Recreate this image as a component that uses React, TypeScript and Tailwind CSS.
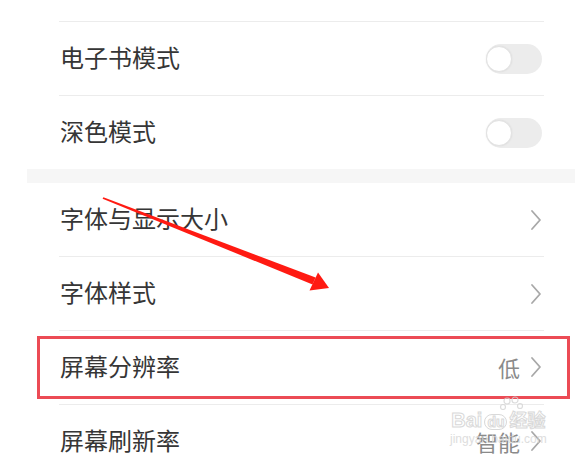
import React from "react";

const font = { fontFamily: '"Noto Sans CJK SC", "Noto Sans", sans-serif' };

function Toggle() {
  return (
    <div className="relative h-[30px] w-[56px] rounded-full bg-[#ececec]">
      <div className="absolute left-0 top-[2px] h-[26px] w-[26px] rounded-full border border-[#e2e2e2] bg-white shadow-[0_0_2px_rgba(0,0,0,0.08)]" />
    </div>
  );
}

function Chevron() {
  return (
    <svg width="12" height="22" viewBox="0 0 12 22" className="ml-[10px]">
      <path d="M2 2 L10 11 L2 20" fill="none" stroke="#a8a8a8" strokeWidth="1.8" strokeLinecap="round" strokeLinejoin="round" />
    </svg>
  );
}

function Line() {
  return <div className="ml-[59px] h-px w-[485px] bg-[#ececec]" />;
}

function Row({ label, right }: { label: string; right: React.ReactNode }) {
  return (
    <div className="flex h-[73px] items-center pl-[60px] pr-[41px]">
      <span className="-mt-[4px] flex-1 text-[24px] leading-none text-[#363636]">{label}</span>
      {right}
    </div>
  );
}

function Value({ text }: { text: string }) {
  return (
    <div className="-mt-[2px] flex items-center">
      <span className="text-[22px] leading-none text-[#8a8a8a]">{text}</span>
      <Chevron />
    </div>
  );
}

export default function App() {
  return (
    <div className="relative h-[459px] w-[583px] overflow-hidden bg-white" style={font}>
      <div className="flex flex-col">
        <div className="h-[21px]" />
        <Line />
        <Row label="电子书模式" right={<Toggle />} />
        <Line />
        <Row label="深色模式" right={<Toggle />} />
        <div className="ml-[27px] h-[14px] w-[548px] bg-[#f6f6f6]" />
        <Row label="字体与显示大小" right={<Chevron />} />
        <Line />
        <Row label="字体样式" right={<Chevron />} />
        <Line />
        <Row label="屏幕分辨率" right={<Value text="低" />} />
        <Line />
        <Row label="屏幕刷新率" right={<Value text="智能" />} />
      </div>

      {/* red highlight box */}
      <div className="absolute left-[37px] top-[336px] h-[63px] w-[533px] border-[3px] border-[#ec4b55]" />

      {/* red arrow */}
      <svg className="pointer-events-none absolute left-0 top-0" width="583" height="459">
        <polygon points="102.6,198.7 103.4,197.3 315.6,277.5 312.5,284.5" fill="#ff1a12" />
        <polygon points="329,288 318,272.5 309.5,290.5" fill="#ff1a12" />
      </svg>

      {/* Baidu watermark */}
      <div className="pointer-events-none absolute left-[450px] top-[396px] flex flex-col items-center opacity-80">
        <svg width="30" height="14" viewBox="0 0 30 14" className="ml-[30px]">
          <circle cx="9" cy="5" r="3" fill="none" stroke="#d4d4d4" strokeWidth="1.2" />
          <circle cx="17" cy="4" r="3" fill="none" stroke="#d4d4d4" strokeWidth="1.2" />
          <circle cx="5" cy="11" r="2.5" fill="none" stroke="#d4d4d4" strokeWidth="1.2" />
          <circle cx="22" cy="10" r="2.5" fill="none" stroke="#d4d4d4" strokeWidth="1.2" />
        </svg>
        <div className="flex items-end leading-none" style={{ fontFamily: '"Liberation Sans", "Noto Sans CJK SC", sans-serif' }}>
          <span className="text-[20px] font-bold text-transparent [-webkit-text-stroke:1px_#d0d0d0]">Bai</span>
          <span className="mx-[2px] rounded-full border border-[#d0d0d0] px-[2px] text-[14px] font-bold text-transparent [-webkit-text-stroke:1px_#d0d0d0]">du</span>
          <span className="text-[18px] font-bold text-transparent [-webkit-text-stroke:1px_#d0d0d0]">经验</span>
        </div>
        <div className="mt-[3px] text-[12px] leading-none text-[#d6d6d6]" style={{ fontFamily: '"Liberation Sans", sans-serif' }}>
          jingyan.baidu.com
        </div>
      </div>
    </div>
  );
}
